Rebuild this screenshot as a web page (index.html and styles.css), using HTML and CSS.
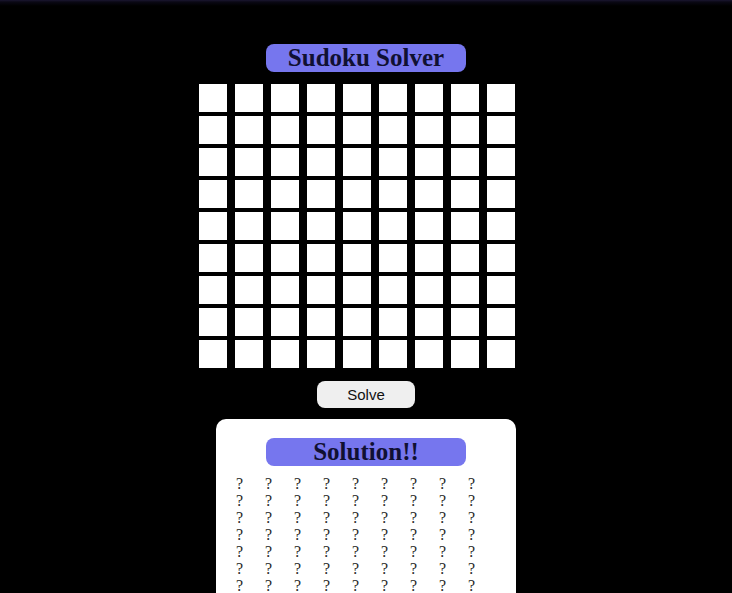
FILE: index.html
```html
<!DOCTYPE html>
<html>
<head>
<meta charset="utf-8">
<link rel="stylesheet" href="styles.css">
</head>
<body>
<div class="page">
  <h1 class="pill">Sudoku Solver</h1>
  <div class="board" id="board"></div>
  <button class="solve">Solve</button>
  <div class="card">
    <h2 class="pill">Solution!!</h2>
    <div class="answers" id="answers"></div>
  </div>
</div>
<script>
  var b = document.getElementById('board');
  var a = document.getElementById('answers');
  for (var i = 0; i < 81; i++) {
    var c = document.createElement('div');
    c.className = 'cell';
    b.appendChild(c);
    var q = document.createElement('span');
    q.textContent = '?';
    a.appendChild(q);
  }
</script>
</body>
</html>
```
FILE: styles.css
```css
html, body {
  margin: 0;
  padding: 0;
  background: #000;
  height: 100%;
  overflow: hidden;
}
body {
  background: linear-gradient(to bottom, #1a1630 0px, #0a0814 2px, #000 6px);
}
.page {
  display: flex;
  flex-direction: column;
  align-items: center;
  padding-top: 44px;
}
.pill {
  margin: 0;
  width: 200px;
  height: 28px;
  line-height: 28px;
  background: #7676ee;
  border-radius: 8px;
  text-align: center;
  font-family: "Liberation Serif", serif;
  font-weight: bold;
  font-size: 25px;
  color: #101032;
}
.board {
  margin-top: 12px;
  margin-right: 18px;
  display: grid;
  grid-template-columns: repeat(9, 28px);
  grid-auto-rows: 28px;
  column-gap: 8px;
  row-gap: 4px;
}
.cell {
  background: #fff;
}
.solve {
  margin-top: 13px;
  width: 98px;
  height: 27px;
  border: none;
  border-radius: 8px;
  background: #efefef;
  font-family: "Liberation Sans", Arial, sans-serif;
  font-size: 15px;
  color: #111;
  padding: 0;
}
.card {
  margin-top: 11px;
  width: 300px;
  background: #fff;
  border-radius: 10px;
  padding: 19px 0 20px;
  display: flex;
  flex-direction: column;
  align-items: center;
}
.answers {
  margin-top: 9px;
  align-self: flex-start;
  margin-left: 20px;
  display: grid;
  grid-template-columns: repeat(9, 29px);
  grid-auto-rows: 17px;
  font-family: "Liberation Serif", serif;
  font-size: 16px;
  line-height: 17px;
  color: #2a2a2a;
}
```
